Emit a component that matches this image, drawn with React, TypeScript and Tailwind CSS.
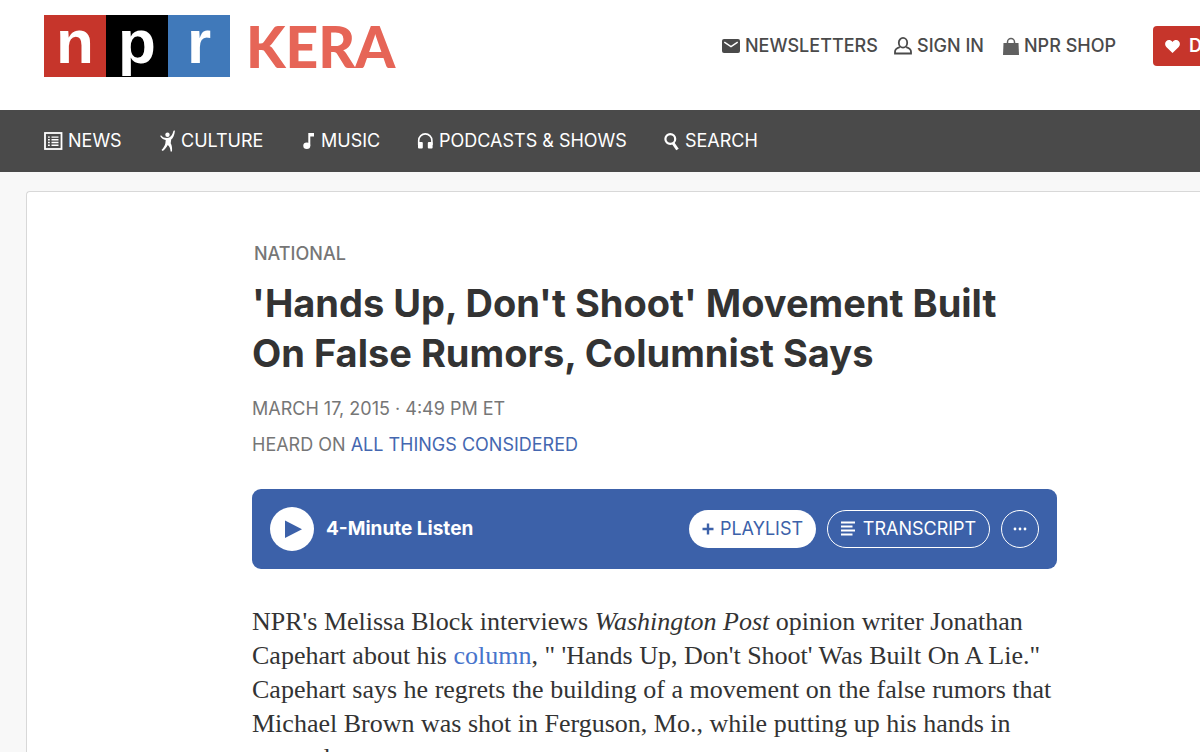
import type { ReactNode } from "react";

const sans = "font-['Inter','Liberation_Sans',sans-serif]";
const serif = "font-['Liberation_Serif',serif]";

export default function App() {
  return (
    <div className={`min-h-screen overflow-x-hidden bg-[#f8f8f8] ${sans}`}>
      <SiteHeader />
      <MainNav />
      <main className="mt-[19px] ml-[26px] rounded-tl border-t border-l border-[#d8d8d8] bg-white pt-[50px] pr-[143px] pb-12 pl-[225px]">
        <article>
          <h3 className="pl-[2px] text-lg leading-6 font-medium text-[#767676]">
            <a href="#national">NATIONAL</a>
          </h3>
          <h1 className="mt-3 text-[38px] leading-[50px] font-bold whitespace-nowrap text-[#333]">
            'Hands Up, Don't Shoot' Movement Built
            <br />
            On False Rumors, Columnist Says
          </h1>
          <div className="mt-[13px] text-lg leading-9 text-[#767676]">
            <p>MARCH 17, 2015 · 4:49 PM ET</p>
            <p>
              HEARD ON{" "}
              <a href="#atc" className="text-[#4467b0]">ALL THINGS CONSIDERED</a>
            </p>
          </div>
          <AudioPlayer />
          <p className={`mt-9 text-[26px] leading-[34px] whitespace-nowrap text-[#333] ${serif}`}>
            NPR's Melissa Block interviews <em>Washington Post</em> opinion writer Jonathan
            <br />
            Capehart about his <a href="#column" className="text-[#4774cc]">column</a>, " 'Hands Up, Don't Shoot' Was Built On A Lie."
            <br />
            Capehart says he regrets the building of a movement on the false rumors that
            <br />
            Michael Brown was shot in Ferguson, Mo., while putting up his hands in
            <br />
            surrender.
          </p>
        </article>
      </main>
    </div>
  );
}

function SiteHeader() {
  return (
    <header className="flex h-[110px] items-start bg-white pl-11">
      <a href="#home" aria-label="NPR" className="mt-[15px] flex shrink-0 font-['Liberation_Sans',sans-serif] text-[62px] leading-[54px] font-bold text-white">
        <span className="h-[62px] w-[62px] bg-[#c6352b] text-center">n</span>
        <span className="h-[62px] w-[62px] bg-black text-center">p</span>
        <span className="h-[62px] w-[62px] bg-[#4079ba] text-center">r</span>
      </a>
      <a href="#kera" className="mt-4 ml-4 font-['Lato',sans-serif] text-[57px] leading-[60px] font-black text-[#e66557]">KERA</a>
      <nav aria-label="Account" className="mt-[26px] ml-auto flex h-10 shrink-0 items-center text-lg font-medium text-[#4a4a4a]">
        <TopLink className="w-[172px]" label="NEWSLETTERS" icon={<MailIcon />} />
        <TopLink className="w-[109px]" label="SIGN IN" icon={<UserIcon />} />
        <TopLink className="w-[150px]" label="NPR SHOP" icon={<BagIcon />} />
        <a href="#donate" className="-mr-[113px] flex h-10 w-[160px] items-center gap-2 rounded-sm bg-[#c6352b] pl-3 font-semibold text-white">
          <HeartIcon />
          DONATE
        </a>
      </nav>
    </header>
  );
}

function TopLink({ className, label, icon }: { className: string; label: string; icon: ReactNode }) {
  return (
    <a href="#top" className={`flex items-center gap-[5px] whitespace-nowrap ${className}`}>
      {icon}
      {label}
    </a>
  );
}

function MainNav() {
  return (
    <nav aria-label="Main" className="flex h-[62px] items-center bg-[#4a4a4a] pl-11 text-lg text-white">
      <TopLink className="w-[116px]" label="NEWS" icon={<NewsIcon />} />
      <TopLink className="w-[142px]" label="CULTURE" icon={<CultureIcon />} />
      <TopLink className="w-[115px]" label="MUSIC" icon={<MusicIcon />} />
      <TopLink className="w-[247px]" label="PODCASTS & SHOWS" icon={<HeadphonesIcon />} />
      <button type="button" className="flex items-center gap-[5px]">
        <SearchIcon />
        SEARCH
      </button>
    </nav>
  );
}

function AudioPlayer() {
  return (
    <section aria-label="Audio player" className="mt-[26px] flex h-20 items-center rounded-[9px] bg-[#3c61a9] px-[18px] text-white">
      <button type="button" aria-label="Play" className="flex h-11 w-11 items-center justify-center rounded-full bg-white">
        <svg width="44" height="44" viewBox="0 0 44 44" fill="#3c61a9">
          <path d="M15 13.5v17.5l17-8.700z" />
        </svg>
      </button>
      <h4 className="ml-3 text-[19px] font-bold">4-Minute Listen</h4>
      <div className="ml-auto flex gap-[11px] text-lg">
        <button type="button" className="flex h-[38px] w-[127px] items-center justify-center gap-[6px] rounded-full bg-white text-[#3c61a9]">
          <svg width="12" height="12" viewBox="0 0 12 12" stroke="currentColor" strokeWidth="2.4">
            <path d="M6 .5v11M.5 6h11" />
          </svg>
          PLAYLIST
        </button>
        <button type="button" className="flex h-[38px] w-[163px] items-center justify-center gap-2 rounded-full border border-white">
          <svg width="14" height="16" viewBox="0 0 14 16" stroke="currentColor" strokeWidth="1.8">
            <path d="M0 1.500h14M0 5.500h11.500M0 9.500h14M0 13.500h11.500" />
          </svg>
          TRANSCRIPT
        </button>
        <button type="button" aria-label="More options" className="flex h-[38px] w-[38px] items-center justify-center rounded-full border border-white">
          <svg width="14" height="4" viewBox="0 0 14 4" fill="currentColor">
            <circle cx="2" cy="2" r="1.400" />
            <circle cx="7" cy="2" r="1.400" />
            <circle cx="12" cy="2" r="1.400" />
          </svg>
        </button>
      </div>
    </section>
  );
}

function MailIcon() {
  return (
    <svg width="18" height="14" viewBox="0 0 18 14">
      <rect width="18" height="14" rx="2" fill="currentColor" />
      <path d="M2.300 3.200 9 7.600l6.700-4.400" fill="none" stroke="white" strokeWidth="1.500" />
    </svg>
  );
}

function UserIcon() {
  return (
    <svg width="18" height="18" viewBox="0 0 18 18" fill="none" stroke="currentColor" strokeWidth="1.800">
      <ellipse cx="9" cy="5.800" rx="4.200" ry="4.900" />
      <path d="M5.800 10.200C3 11 1 12.300 1 14.800V16.500h16v-1.700c0-2.500-2-3.800-4.800-4.600" />
    </svg>
  );
}

function BagIcon() {
  return (
    <svg width="16" height="18" viewBox="0 0 16 18" className="text-[#606060]">
      <path d="M.5 6h15L16 18H0z" fill="currentColor" />
      <path d="M4.500 8V5a3.500 3.500 0 0 1 7 0v3" fill="none" stroke="currentColor" strokeWidth="1.500" />
    </svg>
  );
}

function HeartIcon() {
  return (
    <svg width="15" height="13" viewBox="0 0 15 13" fill="currentColor" className="mr-px">
      <path d="M7.500 13 1.300 6.900C-.3 5.200-.3 2.700 1.200 1.200c1.700-1.700 4.500-1.500 6.300.7 1.800-2.200 4.600-2.400 6.300-.7 1.500 1.500 1.500 4-.1 5.700z" />
    </svg>
  );
}

function NewsIcon() {
  return (
    <svg width="19" height="18" viewBox="0 0 19 18" fill="none" stroke="currentColor">
      <rect x="1" y="1" width="16.500" height="16" strokeWidth="1.800" />
      <path d="M4 5.100h1.800M4 7.800h1.800M4 10.500h1.800M4 13.200h1.800M7.500 5.100h7M7.500 7.800h7M7.500 10.500h7M7.500 13.200h7" strokeWidth="1.400" />
    </svg>
  );
}

function CultureIcon() {
  return (
    <svg width="16" height="22" viewBox="0 0 16 22" fill="currentColor">
      <circle cx="7.500" cy="4.700" r="2.200" />
      <path d="M1 5.300C2.500 7.500 4.500 8 7 8c3.400 0 5.400-2.800 6.500-7.200L15 .4c-.6 4.600-1.800 7.500-3.800 9.200l-.5 3.700c1.300 2.300 1.600 5.200 1.300 8.200h-1.400c-.2-2.700-1-4.800-2.800-6.500C6.400 17.200 5 19.500 2.800 21L1.500 20c2-2 3.200-4.200 3.900-6.800L5.700 10C3.300 9.500 1.400 8.200.2 5.900z" />
    </svg>
  );
}

function MusicIcon() {
  return (
    <svg width="14" height="18" viewBox="0 0 14 18" fill="currentColor">
      <ellipse cx="4.800" cy="13.700" rx="3.500" ry="3.200" />
      <path d="M6.300 1H12v3.500H8.300v9.200h-2z" />
    </svg>
  );
}

function HeadphonesIcon() {
  return (
    <svg width="17" height="18" viewBox="0 0 17 18">
      <path d="M1.700 13V8.500a6.600 6.600 0 0 1 13.200 0V13" fill="none" stroke="currentColor" strokeWidth="1.600" />
      <rect x="1" y="10" width="4.800" height="6.500" rx="1" fill="currentColor" />
      <rect x="10.800" y="10" width="4.800" height="6.500" rx="1" fill="currentColor" />
    </svg>
  );
}

function SearchIcon() {
  return (
    <svg width="16" height="19" viewBox="0 0 16 19" fill="none" stroke="currentColor">
      <circle cx="6.300" cy="7" r="4.900" strokeWidth="2.200" />
      <path d="m9 11 4.500 6.500" strokeWidth="3" />
    </svg>
  );
}
